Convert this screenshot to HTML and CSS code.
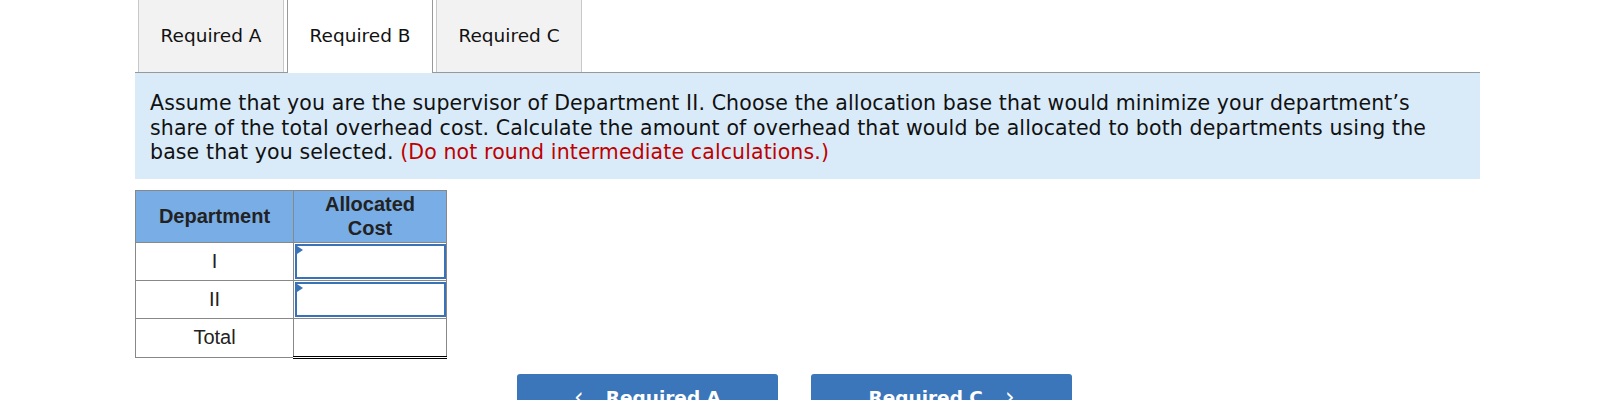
FILE: index.html
```html
<!DOCTYPE html>
<html>
<head>
<meta charset="utf-8">
<link rel="stylesheet" href="styles.css">
</head>
<body>
<div class="wrap">
  <div class="tabs">
    <div class="tab">Required A</div>
    <div class="tab active">Required B</div>
    <div class="tab">Required C</div>
  </div>
  <div class="prompt">
    Assume that you are the supervisor of Department II. Choose the allocation base that would minimize your department’s share of the total overhead cost. Calculate the amount of overhead that would be allocated to both departments using the base that you selected. <span class="red">(Do not round intermediate calculations.)</span>
  </div>
  <table class="grid">
    <thead>
      <tr><th class="c1">Department</th><th class="c2">Allocated<br>Cost</th></tr>
    </thead>
    <tbody>
      <tr><td class="c1">I</td><td class="in"><div class="box"><span class="tri"></span></div></td></tr>
      <tr><td class="c1">II</td><td class="in"><div class="box"><span class="tri"></span></div></td></tr>
      <tr><td class="c1">Total</td><td class="total"></td></tr>
    </tbody>
  </table>
  <div class="nav">
    <div class="btn"><span class="chev">‹</span>Required A</div>
    <div class="btn">Required C<span class="chev r">›</span></div>
  </div>
</div>
</body>
</html>
```

FILE: styles.css
```css
html, body { margin: 0; padding: 0; background: #fff; }
body { overflow: hidden; height: 400px; }
.wrap { margin-left: 135px; width: 1345px; }
.tabs {
  display: flex; gap: 3px; padding-left: 3px; height: 72px;
  border-bottom: 1px solid #999;
}
.tab {
  width: 146px; height: 72px; box-sizing: border-box;
  background: #f2f2f2; border-left: 1px solid #c8c8c8; border-right: 1px solid #c8c8c8;
  display: flex; align-items: center; justify-content: center; padding-bottom: 2px;
  font-family: "DejaVu Sans", Verdana, sans-serif; font-size: 18.5px; color: #111;
}
.tab.active { background: #fff; border-color: #999; height: 73px; padding-bottom: 3px; }
.prompt {
  background: #d9ebf9; padding: 18px 16px 14px 15px;
  font-family: "DejaVu Sans", Verdana, sans-serif; font-size: 20.5px; letter-spacing: 0.12px; line-height: 24.5px; color: #111;
}
.red { color: #c00000; }
.grid { border-collapse: collapse; margin-top: 11px; font-family: "Liberation Sans", Arial, sans-serif; font-size: 20px; color: #222; }
.grid th, .grid td { border: 1px solid #888; padding: 0; text-align: center; }
.grid th { background: #79ade6; font-weight: bold; height: 51px; line-height: 24px; color: #222; }
.c1 { width: 157px; }
.c2 { width: 152px; }
.grid td { height: 37px; }
.grid td.in { padding: 0; vertical-align: top; }
.box { position: relative; margin: 1px 0 0 1px; height: 35px; box-sizing: border-box; border: 2px solid #3a72b8; background: #fff; }
.tri { position: absolute; left: 0; top: 0; width: 0; height: 0; border-top: 4px solid transparent; border-bottom: 4px solid transparent; border-left: 6px solid #3a72b8; }
.grid td.total { border-top: 1px solid #000; border-bottom: 3px double #000; }
.nav { display: flex; gap: 33px; margin-left: 382px; margin-top: 15px; }
.btn {
  width: 261px; height: 40px; background: #3a76b9; border-radius: 3px; color: #fff;
  font-family: "DejaVu Sans", Verdana, sans-serif; font-weight: bold; font-size: 18.5px;
  display: flex; justify-content: center; align-items: flex-start; padding-top: 13px; box-sizing: border-box;
}
.chev { font-weight: normal; margin-right: 22px; font-size: 24px; line-height: 20px; }
.chev.r { margin-right: 0; margin-left: 22px; }
```
